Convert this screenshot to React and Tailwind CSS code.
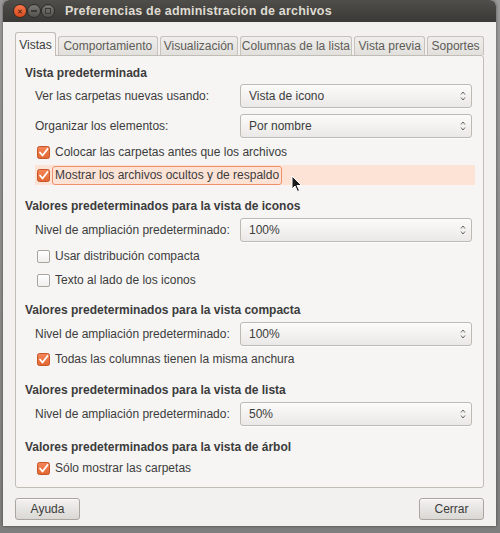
import React from 'react';

const font = { fontFamily: "'Liberation Sans', Arial, sans-serif" };

const Check = ({ checked }) => (
    checked ? (
        <svg width="13" height="13" viewBox="0 0 13 13" className="shrink-0">
            <defs>
                <linearGradient id="cbg" x1="0" y1="0" x2="0" y2="1">
                    <stop offset="0" stopColor="#f4875a" />
                    <stop offset="1" stopColor="#e3652f" />
                </linearGradient>
            </defs>
            <rect x="0.5" y="0.5" width="12" height="12" rx="2" fill="url(#cbg)" stroke="#c4562a" />
            <path d="M3 6.5 L5.5 9.5 L10.5 3" fill="none" stroke="#fff" strokeWidth="1.8" strokeLinecap="round" strokeLinejoin="round" />
        </svg>
    ) : (
        <span className="block w-[13px] h-[13px] shrink-0 rounded-[2px] border border-[#a8a49e] bg-gradient-to-b from-white to-[#f0efed]" />
    )
);

const CheckRow = ({ checked, label, highlight }) => (
    <div className={`flex items-center h-[20px] ml-[19px] mr-[8px] pl-[2px] gap-[2px] ${highlight ? 'bg-[#fde2d6]' : ''}`}>
        <Check checked={checked} />
        <span className={`px-[2px] leading-[17px] rounded-[3px] border whitespace-nowrap ${highlight ? 'border-[#f0906a]' : 'border-transparent'}`}>{label}</span>
    </div>
);

const Combo = ({ label, value }) => (
    <div className="flex items-center h-[24px] ml-[19px] mr-[11px]">
        <span className="w-[205px] shrink-0 whitespace-nowrap">{label}</span>
        <div className="flex-1 h-full flex items-center justify-between rounded-[3px] border border-[#bdb9b3] bg-gradient-to-b from-[#fbfbfa] to-[#ebe9e7] pl-[8px] pr-[5px] shadow-[0_1px_0_rgba(255,255,255,0.8)]">
            <span>{value}</span>
            <svg width="6" height="12" viewBox="0 0 6 12">
                <path d="M1 4.5 L3 2 L5 4.5" fill="none" stroke="#6b6762" strokeWidth="1" />
                <path d="M1 7.5 L3 10 L5 7.5" fill="none" stroke="#6b6762" strokeWidth="1" />
            </svg>
        </div>
    </div>
);

const Header = ({ children, className = '' }) => (
    <div className={`h-[16px] leading-[16px] font-bold whitespace-nowrap ${className}`}>{children}</div>
);

const Tab = ({ label, active, w }) => (
    active ? (
        <div className={`h-[24px] flex items-center justify-center border border-b-0 border-[#c0bcb6] rounded-t-[3px] bg-[#f6f5f4] relative z-10 -mb-px whitespace-nowrap ${w}`}>
            {label}
        </div>
    ) : (
        <div className={`h-[19px] mt-[3px] flex items-center justify-center border border-b-0 border-[#c6c2bc] rounded-t-[3px] bg-gradient-to-b from-[#efeeec] to-[#e2e0dc] text-[#5e5c58] whitespace-nowrap ${w}`}>
            {label}
        </div>
    )
);

const Button = ({ children }) => (
    <div className="w-[65px] h-[22px] flex items-center justify-center rounded-[3px] border border-[#aaa69f] bg-gradient-to-b from-[#f3f2f1] to-[#dad8d4] text-[#3c3c3c] shadow-[inset_0_1px_0_rgba(255,255,255,0.7)]">
        {children}
    </div>
);

export default function App() {
    return (
        <div className="w-[500px] h-[533px] bg-gradient-to-b from-[#9a9a9a] to-[#7e7e7e] overflow-hidden relative" style={font}>
            <div className="ml-[3px] w-[493px] h-[526px] bg-[#f2f1f0] rounded-t-[6px] overflow-hidden flex flex-col text-[12px] text-[#3c3c3c] shadow-[0_0_3px_rgba(0,0,0,0.5)]">
                <div className="h-[22px] shrink-0 flex items-center bg-gradient-to-b from-[#4f4e4a] to-[#3a3935] pl-[10px]">
                    <div className="flex items-center gap-[0px]">
                        <span className="w-[14px] h-[14px] rounded-full bg-gradient-to-b from-[#f7764b] to-[#d94a1c] border border-[#3a2a22] flex items-center justify-center text-[7px] leading-none text-[#3a1a10]">✕</span>
                        <span className="w-[14px] h-[14px] rounded-full bg-gradient-to-b from-[#7a7873] to-[#55534f] border border-[#2e2d2a] flex items-center justify-center">
                            <span className="block w-[6px] h-[2px] bg-[#3a3936]" />
                        </span>
                        <span className="w-[14px] h-[14px] rounded-full bg-gradient-to-b from-[#7a7873] to-[#55534f] border border-[#2e2d2a] flex items-center justify-center">
                            <span className="block w-[6px] h-[6px] border border-[#3a3936]" />
                        </span>
                    </div>
                    <span className="ml-[10px] font-bold text-[12.5px] text-[#dfdbd2] tracking-[0.2px]">Preferencias de administración de archivos</span>
                </div>

                <div className="px-[12px] pt-[10px] flex flex-col flex-1">
                    <div className="flex items-end gap-[2px] pl-0">
                        <Tab label="Vistas" active w="w-[41px]" />
                        <Tab label="Comportamiento" w="w-[100px]" />
                        <Tab label="Visualización" w="w-[78px]" />
                        <Tab label="Columnas de la lista" w="w-[113px]" />
                        <Tab label="Vista previa" w="w-[71px]" />
                        <Tab label="Soportes" w="w-[57px]" />
                    </div>
                    <div className="h-[433px] border border-[#c0bcb6] rounded-b-[3px] rounded-tr-[3px] bg-[#f6f5f4] pt-[9px] flex flex-col">
                        <Header className="ml-[9px]">Vista predeterminada</Header>
                        <div className="mt-[3px]"><Combo label="Ver las carpetas nuevas usando:" value="Vista de icono" /></div>
                        <div className="mt-[6px]"><Combo label="Organizar los elementos:" value="Por nombre" /></div>
                        <div className="mt-[4px]"><CheckRow checked label="Colocar las carpetas antes que los archivos" /></div>
                        <div className="mt-[3px]"><CheckRow checked highlight label="Mostrar los archivos ocultos y de respaldo" /></div>

                        <Header className="ml-[9px] mt-[13px]">Valores predeterminados para la vista de iconos</Header>
                        <div className="mt-[4px]"><Combo label="Nivel de ampliación predeterminado:" value="100%" /></div>
                        <div className="mt-[4px]"><CheckRow label="Usar distribución compacta" /></div>
                        <div className="mt-[4px]"><CheckRow label="Texto al lado de los iconos" /></div>

                        <Header className="ml-[9px] mt-[12px]">Valores predeterminados para la vista compacta</Header>
                        <div className="mt-[4px]"><Combo label="Nivel de ampliación predeterminado:" value="100%" /></div>
                        <div className="mt-[3px]"><CheckRow checked label="Todas las columnas tienen la misma anchura" /></div>

                        <Header className="ml-[9px] mt-[13px]">Valores predeterminados para la vista de lista</Header>
                        <div className="mt-[4px]"><Combo label="Nivel de ampliación predeterminado:" value="50%" /></div>

                        <Header className="ml-[9px] mt-[13px]">Valores predeterminados para la vista de árbol</Header>
                        <div className="mt-[3px]"><CheckRow checked label="Sólo mostrar las carpetas" /></div>
                    </div>
                    <div className="flex justify-between mt-[10px]">
                        <Button>Ayuda</Button>
                        <Button>Cerrar</Button>
                    </div>
                </div>
            </div>

            <svg className="absolute left-[291px] top-[175px]" width="12" height="18" viewBox="0 0 12 18">
                <path d="M1 1 L1 14 L4 11 L6.5 16.5 L8.5 15.5 L6 10.5 L10.5 10.5 Z" fill="#1a1a1a" stroke="#fff" strokeWidth="1" strokeLinejoin="round" />
            </svg>
        </div>
    );
}
